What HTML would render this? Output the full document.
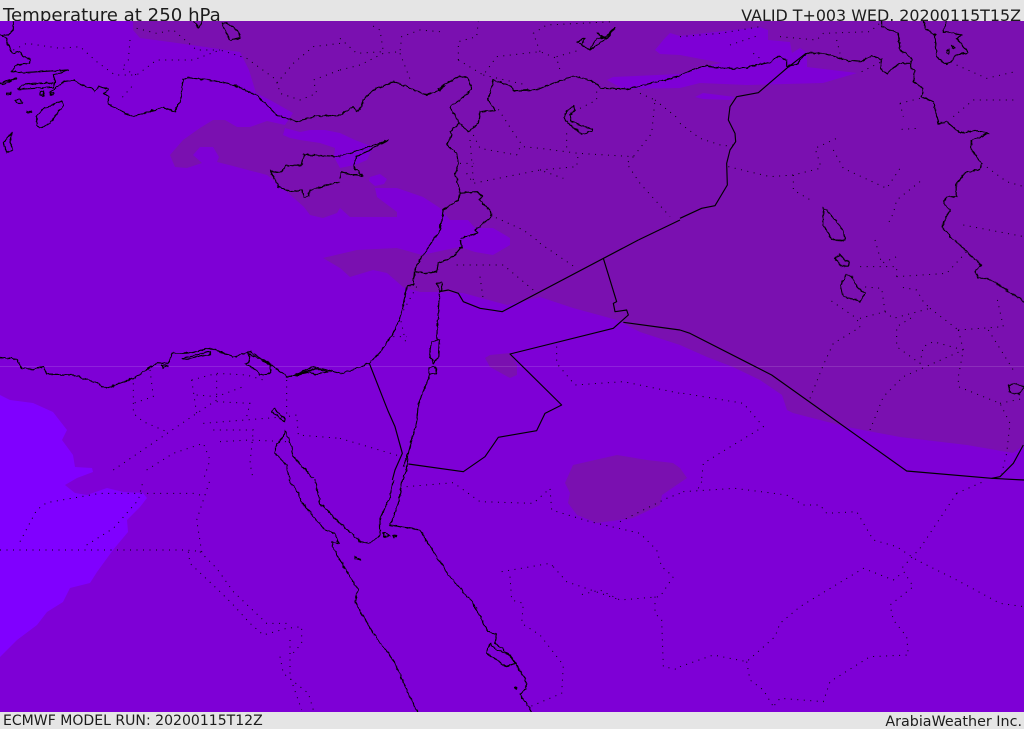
<!DOCTYPE html>
<html><head><meta charset="utf-8"><title>Temperature at 250 hPa</title>
<style>
html,body{margin:0;padding:0;background:#e5e5e5;width:1024px;height:729px;overflow:hidden}
svg{display:block}
text{font-family:"DejaVu Sans","Liberation Sans",sans-serif;fill:#1c1c1c}
.c polyline,.c polygon{fill:none;stroke:#000;stroke-width:1.15;vector-effect:non-scaling-stroke;stroke-linejoin:round}
.d polyline{fill:none;stroke:#000;stroke-width:1;stroke-dasharray:1 5.5;vector-effect:non-scaling-stroke;opacity:.95}
</style></head><body>
<svg width="1024" height="729" viewBox="0 0 1024 729" xmlns="http://www.w3.org/2000/svg">
<defs><clipPath id="m"><rect x="0" y="21" width="1024" height="691"/></clipPath>
<filter id="r" filterUnits="userSpaceOnUse" x="0" y="0" width="1024" height="729"><feTurbulence type="fractalNoise" baseFrequency="0.22" numOctaves="2" seed="4"/><feDisplacementMap in="SourceGraphic" scale="3.2" xChannelSelector="R" yChannelSelector="G"/></filter></defs>
<rect width="1024" height="729" fill="#e5e5e5"/>
<text x="3" y="21" font-size="18.15">Temperature at 250 hPa</text>
<text x="1021" y="21" font-size="15.9" text-anchor="end">VALID T+003 WED. 20200115T15Z</text>
<text x="3" y="725" font-size="14.05">ECMWF MODEL RUN: 20200115T12Z</text>
<text x="1022" y="726" font-size="14.3" text-anchor="end">ArabiaWeather Inc.</text>
<g clip-path="url(#m)">
<rect y="21" width="1024" height="691" fill="#7e00d6"/>
<!-- bright SW region -->
<polygon fill="#8000ff" points="0,395 10,400 33,403 53,412 67,430 62,440 73,455 75,467 92,468 93,472 77,478 65,485 75,493 87,495 107,488 123,492 143,493 147,498 140,507 127,520 128,532 113,550 97,572 90,583 70,588 63,602 47,612 37,625 17,640 0,657"/>
<!-- main dark region -->
<polygon fill="#7a10b0" points="133,21 133,30 140,38 170,42 205,47 240,52 249,70 256,93 270,100 293,113 285,125 267,121 250,127 237,127 225,120 213,120 200,128 183,140 170,155 175,167 187,168 202,163 193,155 200,147 213,147 219,157 217,162 233,166 267,175 277,183 304,207 310,215 323,218 337,213 340,208 350,217 377,217 397,217 397,212 377,197 375,188 397,188 423,197 440,208 450,220 468,220 475,228 493,228 510,238 510,245 493,255 475,252 460,247 445,250 422,255 397,248 357,250 340,254 323,258 340,268 350,277 373,270 387,273 403,287 420,292 440,292 463,293 507,305 540,297 573,308 617,320 640,332 680,345 707,357 733,367 760,380 782,395 787,410 793,413 847,427 900,437 967,445 1013,453 1024,445 1024,21"/>
<!-- light holes -->
<polygon fill="#7e00d6" points="283,135 285,128 300,132 310,130 325,130 340,133 355,140 373,147 367,160 355,165 340,168 334,157 335,148 320,143 300,140 290,138"/>
<polygon fill="#7e00d6" points="370,177 380,174 387,179 384,184 375,186 369,181"/>
<polygon fill="#7e00d6" points="655,50 665,38 670,33 680,36 760,27 768,30 768,40 790,42 792,53 800,48 807,53 807,67 857,73 823,83 747,85 700,83 680,88 623,89 607,80 613,77 680,74 705,66 722,63 680,55 660,54"/>
<polygon fill="#7e00d6" points="695,97 703,93 735,97 730,100 703,99"/>
<!-- patches -->
<polygon fill="#7a10b0" points="485,358 490,355 510,353 517,365 517,375 510,378 490,367"/>
<polygon fill="#7a10b0" points="565,483 570,493 568,503 577,515 597,523 633,518 660,505 662,495 687,478 680,468 673,463 647,460 617,455 573,465"/>
<rect y="366" width="1024" height="1" fill="#fff" opacity=".13"/>
<!-- dotted internal borders -->
<g class="d">
<g transform="scale(.33333)">
<polyline points="40,150 80,130 180,145 240,140 290,185 345,225 410,225 470,180 580,180 660,150 740,175 830,240 840,280 900,300 950,280 940,240 1020,210"/>
<polyline points="390,120 385,180 365,205 410,225"/>
<polyline points="410,85 470,100 520,90 590,150 660,150"/>
<polyline points="1020,130 940,140 880,190 830,250"/>
<polyline points="395,260 360,300"/>
</g>
<g transform="translate(340,0) scale(.33333)">
<polyline points="0,210 60,195 130,160 180,155 185,110 240,90 300,95"/>
<polyline points="0,115 50,160 130,155 120,90 85,70"/>
<polyline points="180,160 215,250"/>
<polyline points="355,180 430,225 470,170 600,155 650,175 660,210"/>
<polyline points="355,180 355,125 410,110 415,65"/>
<polyline points="430,225 560,255"/>
<polyline points="600,155 580,100 620,75 820,65"/>
<polyline points="650,170 720,150"/>
<polyline points="720,325 770,300 770,265"/>
<polyline points="900,280 945,300 935,400 880,470 715,460 600,445 550,440 525,405 470,320"/>
<polyline points="400,405 420,445 530,465 545,430"/>
<polyline points="390,420 400,540"/>
<polyline points="360,490 400,490"/>
<polyline points="380,520 400,550 600,510 670,535"/>
<polyline points="600,510 710,500 715,460"/>
<polyline points="880,470 860,490 900,550 990,650"/>
<polyline points="450,645 550,690 590,720"/>
<polyline points="680,400 680,445"/>
<polyline points="945,300 1020,360"/>
</g>
<g transform="translate(680,0) scale(.33333)">
<polyline points="0,110 120,100 240,80"/>
<polyline points="150,135 240,105"/>
<polyline points="300,110 410,120 430,100 570,95 605,65"/>
<polyline points="470,120 480,160"/>
<polyline points="220,160 240,175"/>
<polyline points="0,370 60,415 130,438 160,435"/>
<polyline points="145,500 270,530 340,525 420,505 420,490 405,445 470,415"/>
<polyline points="460,450 490,505 620,565 660,505"/>
<polyline points="340,525 340,570 400,605"/>
<polyline points="720,545 650,600 640,640 620,680"/>
<polyline points="665,388 715,385"/>
<polyline points="660,310 720,295"/>
<polyline points="660,310 670,350"/>
<polyline points="820,350 880,300 1005,300"/>
<polyline points="905,490 980,545 1032,560"/>
<polyline points="850,675 1032,710"/>
<polyline points="545,215 605,185"/>
<polyline points="830,195 920,235 1005,215"/>
</g>
<g transform="translate(0,240) scale(.33333)">
<polyline points="400,430 400,520 430,545 500,575"/>
<polyline points="450,390 460,470 400,490"/>
<polyline points="340,690 590,520 650,480 650,400"/>
<polyline points="575,420 650,400 740,405 790,420"/>
<polyline points="575,420 590,520"/>
<polyline points="590,465 650,470 730,440"/>
<polyline points="650,485 750,490 740,530"/>
<polyline points="610,550 860,530"/>
<polyline points="860,420 860,530 890,525 895,585 1020,595"/>
<polyline points="640,570 760,570 750,670 760,720"/>
<polyline points="660,605 750,600 860,605"/>
<polyline points="440,690 520,640 610,610 630,660 610,720"/>
</g>
<g transform="translate(340,240) scale(.33333)">
<polyline points="0,595 185,650"/>
<polyline points="650,320 650,370 705,435 850,425 1020,460"/>
<polyline points="600,10 710,85"/>
<polyline points="350,75 490,75 580,150"/>
<polyline points="420,110 430,180"/>
<polyline points="230,140 180,230 200,320"/>
<polyline points="160,290 200,290"/>
</g>
<g transform="translate(680,240) scale(.33333)">
<polyline points="10,460 190,490 250,560 70,670 65,715"/>
<polyline points="390,475 430,375 460,310 540,262 530,235 450,180"/>
<polyline points="540,235 615,215 605,145 545,140"/>
<polyline points="615,215 640,235 750,205 730,185 710,150 655,140"/>
<polyline points="650,110 800,100 860,35"/>
<polyline points="650,110 650,80 540,80"/>
<polyline points="570,570 610,470 670,410 850,330 760,305 730,320 720,370 650,320 650,260 700,230"/>
<polyline points="835,270 970,260 950,170"/>
<polyline points="835,270 850,330 835,410 835,440 960,490 990,550 980,640 965,700"/>
<polyline points="750,205 835,270"/>
<polyline points="925,270 1000,390"/>
<polyline points="960,490 1032,475"/>
<polyline points="585,0 605,70 650,50"/>
</g>
<g transform="translate(0,480) scale(.33333)">
<polyline points="0,210 560,210 605,215 590,120 630,0"/>
<polyline points="60,185 110,90 140,68 300,40 420,40 580,40 600,45"/>
<polyline points="260,195 340,145 415,60 430,0"/>
<polyline points="565,215 570,250 660,335 700,375 750,430 790,465 860,445 905,440 905,490 870,530"/>
<polyline points="600,215 650,265 700,335 800,430 870,430"/>
<polyline points="840,530 850,580 925,640 940,690"/>
<polyline points="870,480 870,590 905,690"/>
</g>
<g transform="translate(340,480) scale(.33333)">
<polyline points="200,20 340,8 420,65 580,70 630,25 635,90 750,125 900,160 950,210 965,260 1000,290 960,350 840,360 780,330 720,345"/>
<polyline points="840,125 980,55 1020,40"/>
<polyline points="640,260 680,305 840,360"/>
<polyline points="485,275 630,250 640,260"/>
<polyline points="510,290 515,360 550,370 545,430 600,465 670,555 665,640 570,680"/>
<polyline points="945,350 945,400 965,420 970,560 1020,570"/>
</g>
<g transform="translate(680,480) scale(.33333)">
<polyline points="10,35 165,25 320,45 370,75 420,75 440,100 530,95 580,180 650,200 710,240 830,300 960,370 1032,380"/>
<polyline points="830,40 720,205 665,265 700,320 630,375 640,420 680,470 685,525 570,530 450,605 430,665 300,655 280,680"/>
<polyline points="0,560 100,525 200,545 285,470 300,430 360,380 550,265 640,300 665,280"/>
<polyline points="200,545 210,600 250,630 280,680"/>
<polyline points="830,40 910,5"/>
<polyline points="55,25 65,5"/>
</g>
</g>
<!-- coasts -->
<g class="c" filter="url(#r)">
<g transform="scale(.33333)">
<polyline points="40,63 40,90 25,105 0,105"/>
<polyline points="0,100 20,120 35,160 60,155 70,170 92,178 90,190 50,195 35,215 65,218 205,210 160,225 165,245 160,262 55,268 65,255 100,250 160,248"/>
<polyline points="150,278 190,245 220,240 250,258 275,265 285,275 295,258 325,268 310,280 325,290 325,312 365,335 400,350 490,322 525,335 545,290 548,240 565,233 640,242 700,255 770,285 800,315 830,345 890,365 940,350 1020,345"/>
<polygon points="110,350 130,325 185,303 190,315 150,370 120,385 110,375"/>
<polygon points="10,430 35,397 30,425 38,450 20,458"/>
<polygon points="20,278 32,278 30,284 20,284"/>
<polygon points="80,333 95,333 95,337 80,337"/>
<polygon points="45,300 60,298 68,310 50,308"/>
<polygon points="120,275 132,272 132,288 120,285"/>
<polygon points="150,278 160,278 160,284 150,284"/>
<polyline points="0,248 50,235 10,252 0,250"/>
<polyline points="1020,470 912,463 905,497 855,497 845,515 822,518 810,510 835,560 870,575 905,570 912,590 925,590 930,570 1020,545"/>
<polygon points="665,70 680,68 710,90 722,113 690,122"/>
<polyline points="580,63 595,85 607,63"/>
</g>
<g transform="translate(340,0) scale(.33333)">
<polyline points="0,345 40,320 50,335 65,320 70,300 100,270 160,245 195,258 260,285 300,270 310,255 360,228 385,235 395,265 380,285 330,320 358,370 330,395 335,405 320,435 350,460 355,490 345,520 360,575 355,600 310,630 300,690 280,720"/>
<polyline points="358,370 385,395 415,370 420,335 465,330 445,300 460,240 515,258 520,272 585,270 700,228 750,240 785,265 860,268 1020,228"/>
<polyline points="360,578 410,575 430,590 415,600 450,630 455,650 405,690 415,700 360,715"/>
<polyline points="295,265 315,258 300,272 295,265"/>
<polyline points="0,468 60,450 145,420 50,470 40,500 70,528 35,525 5,515 0,535"/>
<polyline points="710,125 735,115 725,135 750,150 770,115 800,110 825,80 800,118 770,100 800,115 750,150 710,125"/>
<polygon points="700,318 703,332 690,345 695,365 735,380 755,385 757,393 725,403 690,375 672,352 680,335"/>
</g>
<g transform="translate(680,0) scale(.33333)">
<polyline points="605,63 605,80 655,100 660,150 695,175 690,205 705,210 700,245 730,265 725,290 760,305 775,370 800,365 840,398 890,392 928,400 875,420 875,450 905,490 900,510 860,515 830,550 830,590 800,590 790,610 810,630 785,680 820,720"/>
<polyline points="0,225 70,198 135,205 185,205 270,187 295,167 320,180 320,200 350,195 378,160 430,160 505,182 540,185 575,167 605,178 600,205 620,220 660,190 690,190"/>
<polyline points="730,63 735,85 765,105 770,170 800,195 830,165 865,158 830,115 845,105 790,95 800,63"/>
<polygon points="800,150 808,150 806,162 800,158"/>
<polygon points="813,138 825,140 820,146"/>
<polygon points="430,625 440,630 490,690 495,720 455,718 430,675"/>
</g>
<g transform="translate(0,240) scale(.33333)">
<polyline points="1020,400 980,390 940,380 880,408 860,410 815,375 750,335 700,350 630,325 560,340 515,340 505,370 470,368 400,415 320,445 280,425 220,405 140,402 130,380 100,388 65,385 50,358 0,352"/>
<polyline points="545,355 630,335 630,345 590,350 560,358 545,355"/>
<polyline points="485,375 505,378 490,384 485,375"/>
<polygon points="745,340 750,365 735,372 770,390 780,405 812,400 812,375"/>
<polyline points="880,408 930,395 945,405 985,395 945,385 880,408"/>
<polygon points="815,515 825,505 835,520 855,535 855,545 835,530"/>
<polyline points="855,570 850,590 825,620 825,640 860,675 870,720"/>
<polyline points="855,570 875,620 880,650 940,715"/>
</g>
<g transform="translate(0,480) scale(.33333)">
<polyline points="865,0 890,30 905,65 940,110 975,150 1005,160 1015,190 995,185 1000,205 1020,240"/>
<polyline points="945,0 960,70 1020,130"/>
</g>
<g transform="translate(340,240) scale(.33333)">
<polyline points="280,0 240,60 222,95 220,135 200,137 185,220 160,280 130,325 90,368 40,390 0,400"/>
<polyline points="360,0 365,20 340,50 295,70 290,95 260,100 225,95"/>
<polygon points="290,130 305,128 307,150 298,155"/>
<polyline points="298,160 290,300"/>
<polygon points="275,305 298,300 295,350 280,370 268,340"/>
<polygon points="265,385 275,380 290,385 288,403 270,403"/>
<polyline points="272,400 235,490 230,545 205,640 190,680"/>
<polyline points="205,640 200,690 187,720"/>
</g>
<g transform="translate(680,240) scale(.33333)">
<polyline points="825,0 860,35 905,75 885,95 895,115 930,118 1032,185"/>
<polygon points="465,55 480,43 495,60 508,65 505,80 485,80"/>
<polygon points="498,105 515,108 535,145 555,160 540,185 510,175 490,170 482,135"/>
<polygon points="985,435 1010,430 1030,440 1020,462 990,458"/>
<polyline points="458,0 490,3"/>
</g>
<g transform="translate(340,480) scale(.33333)">
<polyline points="0,130 60,185 90,190 120,165 120,115 150,50 160,0"/>
<polyline points="187,0 175,70 150,135 240,150 290,230 330,290 400,370 445,455 470,465 465,490 510,525 555,595 560,625 540,645 565,678 575,700"/>
<polyline points="0,240 30,290 55,330 45,365 100,460 160,540 205,640 232,695"/>
<polygon points="450,490 440,520 500,560 525,550 510,525 470,510"/>
<polygon points="130,158 150,168 132,170"/>
<polygon points="158,165 168,168 162,172"/>
<polygon points="45,230 60,238 62,242 45,236"/>
<polygon points="525,622 532,624 530,628"/>
</g>
</g>
<!-- straight political borders -->
<g class="c">
<g transform="translate(340,0) scale(.33333)">
<polyline points="895,720 1020,660"/>
</g>
<g transform="translate(680,0) scale(.33333)">
<polyline points="0,655 65,625 105,617 142,555 140,490 150,450 167,425 165,400 145,360 150,320 170,290 235,278 320,205 378,160"/>
</g>
<g transform="translate(340,240) scale(.33333)">
<polyline points="298,155 325,150 355,160 370,185 420,205 487,215 895,0"/>
<polyline points="88,370 135,490 145,515 165,560 187,640 165,690 157,720"/>
<polyline points="205,672 370,695 435,650 475,592 590,572 615,520 665,495 510,342 820,265 865,225 860,210 825,215 820,190 830,185 790,55"/>
<polyline points="850,247 1020,270"/>
</g>
<g transform="translate(680,240) scale(.33333)">
<polyline points="0,270 30,280 275,405 680,693 935,715 960,710 1000,670 1030,615"/>
<polyline points="935,715 1032,720"/>
</g>
</g>
</g>
</svg>
</body></html>
